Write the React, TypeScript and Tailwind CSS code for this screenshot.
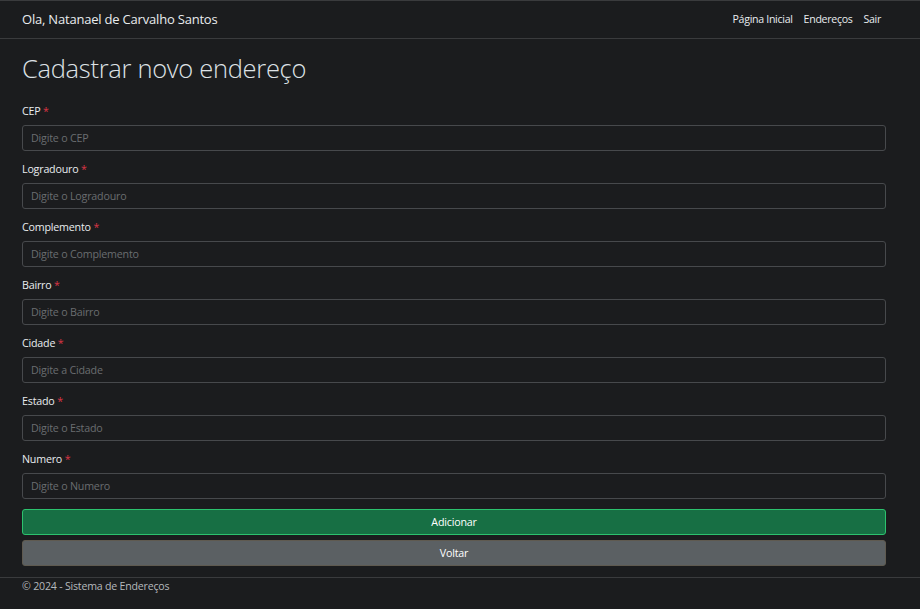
const FIELDS = [
  {label: 'CEP', placeholder: 'Digite o CEP'},
  {label: 'Logradouro', placeholder: 'Digite o Logradouro'},
  {label: 'Complemento', placeholder: 'Digite o Complemento'},
  {label: 'Bairro', placeholder: 'Digite o Bairro'},
  {label: 'Cidade', placeholder: 'Digite a Cidade'},
  {label: 'Estado', placeholder: 'Digite o Estado'},
  {label: 'Numero', placeholder: 'Digite o Numero'},
];

export default function App() {
  return (
    <div
      className="min-h-[609px] w-[920px] bg-[#1b1c1e] text-[#dee2e6]"
      style={{fontFamily: '"Open Sans", "Liberation Sans", sans-serif'}}
    >
      <header className="border-t border-b border-[#3a3b3d]">
        <nav className="flex h-[37px] items-center justify-between pl-[22px] pr-[39px]">
          <span className="text-[13px] tracking-[-0.2px] text-[#e9ecef]">
            Ola, Natanael de Carvalho Santos
          </span>
          <ul className="flex gap-[11px] text-[10.6px] tracking-[-0.3px] text-[#e9ecef]">
            <li>Página Inicial</li>
            <li>Endereços</li>
            <li>Sair</li>
          </ul>
        </nav>
      </header>

      <main className="w-[886px] pl-[22px]">
        <h1 className="mt-[12px] text-[25.5px] font-light leading-[34px] tracking-[-0.3px] text-[#dee2e6]">
          Cadastrar novo endereço
        </h1>

        <form className="mt-[18px] flex flex-col">
          {FIELDS.map(field => (
            <div key={field.label} className="mb-[10px] flex flex-col">
              <label className="mb-[6px] text-[10.7px] leading-[16px] tracking-[-0.2px] text-[#e9ecef]">
                {field.label} <span className="text-[#dc3545]">*</span>
              </label>
              <input
                type="text"
                placeholder={field.placeholder}
                className="h-[26px] rounded-[3px] border border-[#47494c] bg-[#1b1c1e] px-[8px] text-[10.7px] tracking-[-0.2px] text-[#dee2e6] outline-none placeholder:text-[#6a6d70]"
              />
            </div>
          ))}

          <button
            type="button"
            className="h-[26px] rounded-[3px] border border-[#2cc26e] bg-[#176f44] text-[10.7px] tracking-[-0.2px] text-white"
          >
            Adicionar
          </button>
          <button
            type="button"
            className="mt-[5px] h-[26px] rounded-[3px] border border-[#5f5a50] bg-[#5b6063] text-[10.7px] tracking-[-0.2px] text-white"
          >
            Voltar
          </button>
        </form>
      </main>

      <footer className="mt-[11px] border-t border-[#3a3b3d] pl-[22px] text-[10.6px] leading-[16px] tracking-[-0.2px] text-[#b5b9bd]">
        © 2024 - Sistema de Endereços
      </footer>
    </div>
  );
}
